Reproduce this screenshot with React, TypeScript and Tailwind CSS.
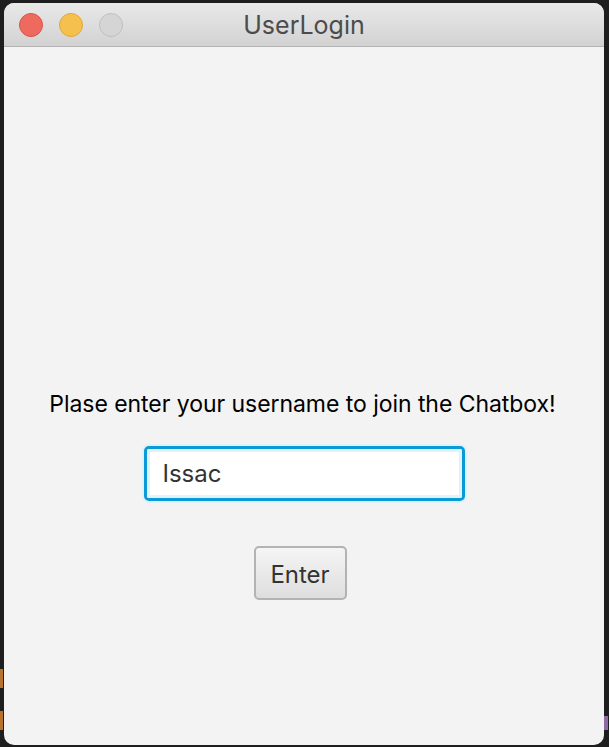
import React from "react";

export default function App() {
  return (
    <div className="relative w-[609px] h-[747px] overflow-hidden bg-[#1e1e1e]" style={{ fontFamily: '"Inter", "Liberation Sans", sans-serif' }}>
      {/* fragments of background editor text peeking out */}
      <div className="absolute left-0 top-[669px] w-[3px] h-[19px] bg-[#b8742f]" />
      <div className="absolute left-0 top-[711px] w-[3px] h-[19px] bg-[#b8742f]" />
      <div className="absolute left-[604px] top-[716px] w-[4px] h-[14px] bg-[#8e6aa3]" />

      <div className="relative ml-[4px] mt-[3px] w-[600px] h-[742px] rounded-[10px] overflow-hidden bg-[#f3f3f3] flex flex-col">
        {/* title bar */}
        <div className="relative h-[44px] shrink-0 bg-gradient-to-b from-[#e9e9e9] to-[#d2d2d2] border-b border-[#b4b4b4] flex items-center">
          <div className="flex items-center gap-[16px] pl-[15px]">
            <div className="w-[24px] h-[24px] rounded-full bg-[#ee6a5f] border border-[#d9534a]" />
            <div className="w-[24px] h-[24px] rounded-full bg-[#f6c04f] border border-[#dea73a]" />
            <div className="w-[24px] h-[24px] rounded-full bg-[#d5d5d5] border border-[#bebebe]" />
          </div>
          <div className="absolute inset-0 flex items-center justify-center pt-[2px] text-[25px] text-[#4c4c4c]">UserLogin</div>
        </div>

        {/* content */}
        <div className="flex flex-col items-center pt-[343px]">
          <div className="ml-[-3px] text-[23px] leading-[28px] tracking-[-0.05px] text-black">Plase enter your username to join the Chatbox!</div>
          <div className="mt-[28px] w-[321px] h-[55px] rounded-[5px] border-[3px] border-[#0a9bd6] bg-white shadow-[0_0_0_2px_#dff1fa] flex items-center">
            <div className="w-full h-full rounded-[2px] border-[3px] border-[#e2f2fa] flex items-center pl-[13px] text-[24px] text-[#333333]">Issac</div>
          </div>
          <div className="mt-[45px] mr-[8px] w-[93px] h-[54px] rounded-[5px] border-2 border-[#b3b3b3] bg-gradient-to-b from-[#f5f5f5] to-[#dedede] flex items-center justify-center pt-[3px] text-[24px] text-[#333333]">Enter</div>
        </div>
      </div>
    </div>
  );
}
